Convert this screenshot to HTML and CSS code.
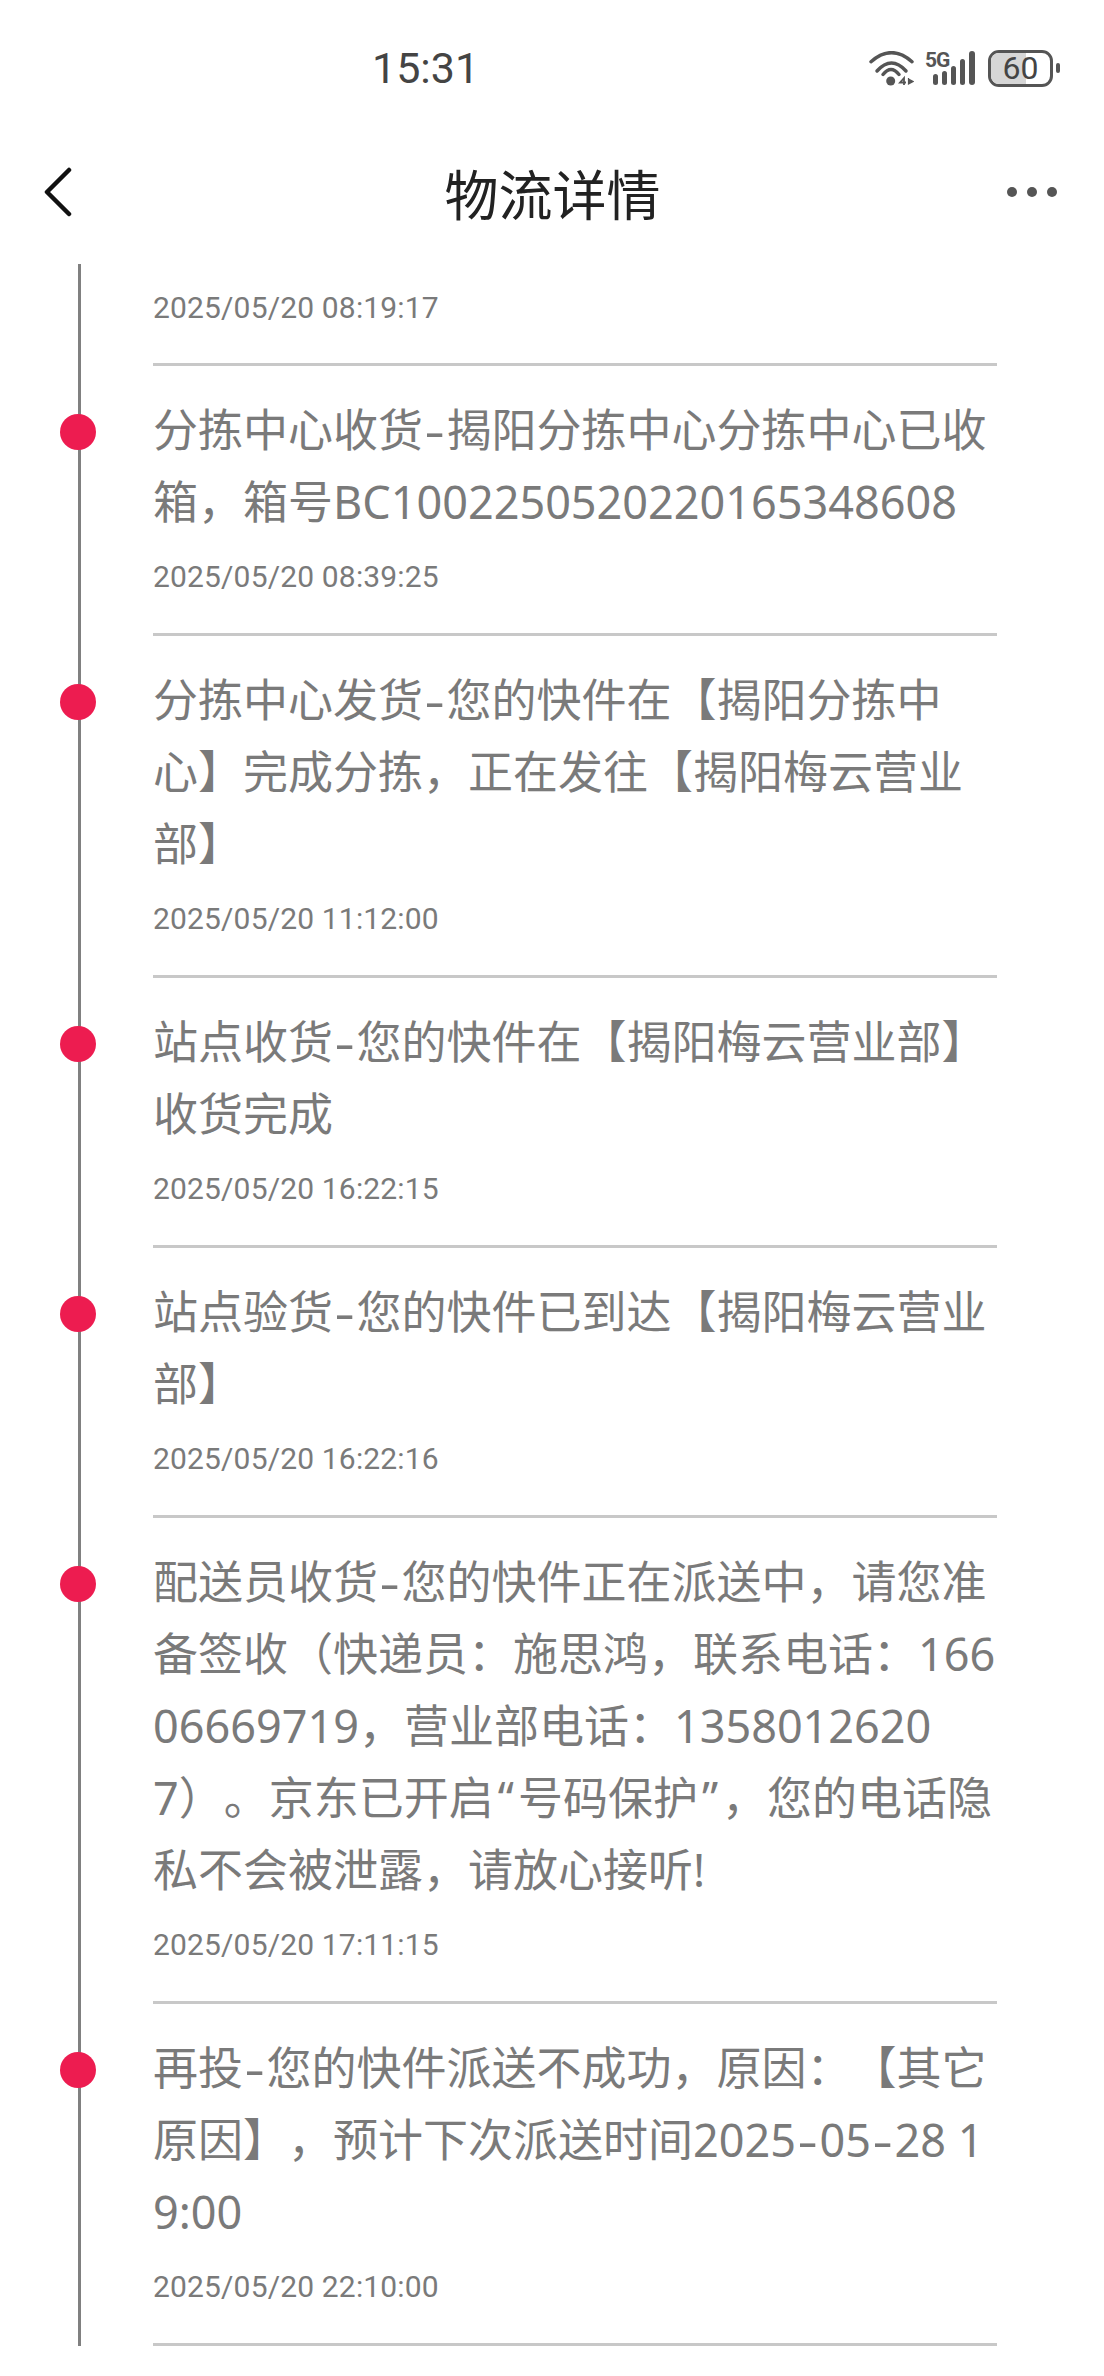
FILE: index.html
```html
<!DOCTYPE html>
<html lang="zh-CN">
<head>
    <meta charset="UTF-8">
    <meta name="viewport" content="width=device-width, initial-scale=1.0">
    <title>物流详情</title>
    <link rel="stylesheet" href="styles.css">
</head>
<body>
    <div class="status-bar">
        <span class="clock">15:31</span>
        <div class="status-icons">
            <svg class="wifi" width="45" height="35" viewBox="0 0 45 35">
                <path d="M2 10.700Q22.500 -7.300 43 10.700" fill="none" stroke="#555" stroke-width="3.500" stroke-linecap="round"/>
                <path d="M8 20Q22.500 4 37 20" fill="none" stroke="#555" stroke-width="3.500" stroke-linecap="round"/>
                <path d="M14 23.500Q22 13.500 30 23.500" fill="none" stroke="#555" stroke-width="3.500" stroke-linecap="round"/>
                <circle cx="21.700" cy="30" r="4.500" fill="#555"/>
                <path d="M35 34V27L31 31.500H37" fill="none" stroke="#555" stroke-width="1.800"/>
                <path d="M39.500 27V34M39.500 28L44 30.500L39.500 33Z" fill="#555" stroke="#555" stroke-width="1.200"/>
            </svg>
            <div class="signal">
                <span class="net-label">5G</span>
                <svg width="43" height="34" viewBox="0 0 43 34">
                    <rect x="0" y="23" width="5" height="11" rx="2.500" fill="#555"/>
                    <rect x="9" y="20" width="5" height="14" rx="2.500" fill="#555"/>
                    <rect x="18" y="15" width="5" height="19" rx="2.500" fill="#555"/>
                    <rect x="27" y="8" width="5" height="26" rx="2.500" fill="#555"/>
                    <rect x="36" y="0" width="6" height="34" rx="3" fill="#555"/>
                </svg>
            </div>
            <div class="battery">
                <div class="battery-body">
                    <div class="battery-level" style="width: 60%"></div>
                    <span class="battery-text">60</span>
                </div>
                <div class="battery-nub"></div>
            </div>
        </div>
    </div>

    <div class="nav-bar">
        <svg class="back-icon" width="30" height="50" viewBox="0 0 30 50">
            <path d="M26 3L4 25L26 47" fill="none" stroke="#111" stroke-width="4.500" stroke-linecap="round" stroke-linejoin="round"/>
        </svg>
        <h1 class="nav-title">物流详情</h1>
        <div class="more-icon"><span></span><span></span><span></span></div>
    </div>

    <div class="timeline">
        <div class="track-item no-text">
            <div class="marker"></div>
            <div class="track-body">
                <p class="track-time">2025/05/20 08:19:17</p>
            </div>
        </div>
        <div class="track-item">
            <div class="marker"><i class="dot"></i></div>
            <div class="track-body">
                <p class="track-text">分拣中心收货<span class="dash">-</span>揭阳分拣中心分拣中心已收<br>箱，箱号BC1002250520220165348608</p>
                <p class="track-time">2025/05/20 08:39:25</p>
            </div>
        </div>
        <div class="track-item">
            <div class="marker"><i class="dot"></i></div>
            <div class="track-body">
                <p class="track-text">分拣中心发货<span class="dash">-</span>您的快件在【揭阳分拣中<br>心】完成分拣，正在发往【揭阳梅云营业<br>部】</p>
                <p class="track-time">2025/05/20 11:12:00</p>
            </div>
        </div>
        <div class="track-item">
            <div class="marker"><i class="dot"></i></div>
            <div class="track-body">
                <p class="track-text">站点收货<span class="dash">-</span>您的快件在【揭阳梅云营业部】<br>收货完成</p>
                <p class="track-time">2025/05/20 16:22:15</p>
            </div>
        </div>
        <div class="track-item">
            <div class="marker"><i class="dot"></i></div>
            <div class="track-body">
                <p class="track-text">站点验货<span class="dash">-</span>您的快件已到达【揭阳梅云营业<br>部】</p>
                <p class="track-time">2025/05/20 16:22:16</p>
            </div>
        </div>
        <div class="track-item">
            <div class="marker"><i class="dot"></i></div>
            <div class="track-body">
                <p class="track-text">配送员收货<span class="dash">-</span>您的快件正在派送中，请您准<br>备签收（快递员：施思鸿，联系电话：166<br>06669719，营业部电话：1358012620<br>7）。京东已开启<span class="quote">“</span>号码保护<span class="quote">”</span>，您的电话隐<br>私不会被泄露，请放心接听!</p>
                <p class="track-time">2025/05/20 17:11:15</p>
            </div>
        </div>
        <div class="track-item">
            <div class="marker"><i class="dot"></i></div>
            <div class="track-body">
                <p class="track-text">再投<span class="dash">-</span>您的快件派送不成功，原因：【其它<br>原因】，预计下次派送时间2025<span class="dash">-</span>05<span class="dash">-</span>28 1<br>9:00</p>
                <p class="track-time">2025/05/20 22:10:00</p>
            </div>
        </div>
    </div>
</body>
</html>
```

FILE: styles.css
```css
* {
    margin: 0;
    padding: 0;
    box-sizing: border-box;
    font-family: "Noto Sans", "Noto Sans CJK SC", sans-serif;
}

body {
    background-color: #fff;
    overflow: hidden;
}

.status-bar {
    height: 122px;
    padding: 14px 44px 0 372px;
    display: flex;
    justify-content: space-between;
    align-items: center;
}

.clock {
    font-family: Roboto, sans-serif;
    font-size: 43px;
    color: #444;
}

.status-icons {
    display: flex;
    align-items: center;
}

.wifi {
    margin-right: 11px;
}

.signal {
    display: flex;
    align-items: flex-end;
    height: 34px;
    position: relative;
    padding-left: 8px;
}

.net-label {
    position: absolute;
    left: 0;
    top: 0;
    font-family: Roboto, sans-serif;
    font-size: 21px;
    font-weight: 700;
    line-height: 19px;
    letter-spacing: -1px;
    color: #555;
}

.battery {
    display: flex;
    align-items: center;
    margin-left: 12px;
}

.battery-body {
    position: relative;
    width: 65px;
    height: 37px;
    border: 3px solid #555;
    border-radius: 11px;
    overflow: hidden;
    display: flex;
    justify-content: center;
    align-items: center;
}

.battery-level {
    position: absolute;
    left: 0;
    top: 0;
    bottom: 0;
    background-color: #d6d6d6;
}

.battery-text {
    position: relative;
    font-family: Roboto, sans-serif;
    font-size: 32px;
    color: #444;
}

.battery-nub {
    width: 4px;
    height: 10px;
    margin-left: 3px;
    border-radius: 2px;
    background-color: #555;
}

.nav-bar {
    height: 140px;
    margin-bottom: 2px;
    padding: 0 47px 0 43px;
    display: grid;
    grid-template-columns: 1fr auto 1fr;
    align-items: center;
}

.nav-title {
    margin-left: 5px;
    font-size: 54px;
    font-weight: 400;
    color: #222;
}

.more-icon {
    display: flex;
    justify-content: flex-end;
    gap: 10px;
}

.more-icon span {
    width: 10px;
    height: 10px;
    border-radius: 50%;
    background-color: #555;
}

.timeline {
    position: relative;
}

.timeline::before {
    content: "";
    position: absolute;
    left: 78px;
    top: 0;
    bottom: 0;
    width: 3px;
    background-color: #808080;
}

.track-item {
    display: flex;
}

.marker {
    width: 153px;
    flex-shrink: 0;
    padding: 48px 0 0 60px;
}

.dot {
    position: relative;
    display: block;
    width: 36px;
    height: 36px;
    border-radius: 50%;
    background-color: #ed1c50;
}

.track-body {
    width: 844px;
    padding: 28px 0 36px;
    border-bottom: 3px solid #c8c8c8;
}

.no-text .track-body {
    padding: 24px 0 35px;
}

.track-text {
    font-size: 45px;
    line-height: 72px;
    color: #7a7a7a;
    white-space: nowrap;
    margin-bottom: 19px;
    text-spacing-trim: space-all;
}

.dash {
    display: inline-block;
    width: 23.5px;
    text-align: center;
    transform: scaleX(1.4);
}

.quote {
    padding: 0 4px;
}

.track-time {
    font-family: Roboto, sans-serif;
    font-size: 30px;
    line-height: 40px;
    letter-spacing: 0.16px;
    color: #7a7a7a;
}
```
